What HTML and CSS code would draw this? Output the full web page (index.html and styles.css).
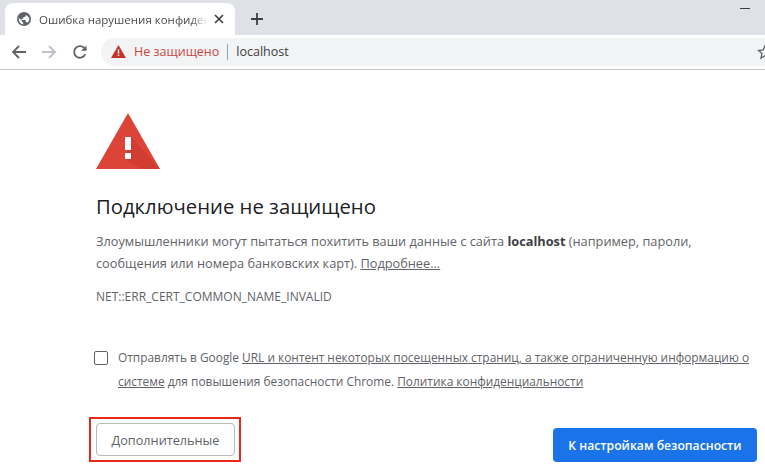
FILE: index.html
```html
<!DOCTYPE html>
<html lang="ru">
<head>
  <meta charset="UTF-8">
  <title>Ошибка нарушения конфиденциальности</title>
  <link rel="stylesheet" href="styles.css">
</head>
<body>
  <div class="tabstrip">
    <div class="tab">
      <svg class="favicon" width="14" height="14" viewBox="0 0 16 16">
        <circle cx="8" cy="8" r="8" fill="#5f6368"/>
        <path d="M7 14.300C4.300 13.800 2 11.300 2 8c0-.5.1-.9.2-1.300L5.600 10v.7c0 .7.6 1.300 1.400 1.300zM12 12.400c-.2-.5-.7-.9-1.300-.9H10V9.600c0-.4-.3-.6-.6-.6H5.300V7.600h1.300c.4 0 .7-.3.7-.7V5.600h1.300c.7 0 1.400-.6 1.400-1.300v-.9C12.300 4.300 14 6 14 8c0 1.700-.8 3.300-2 4.400z" fill="#fff"/>
      </svg>
      <span class="tab-title">Ошибка нарушения конфиденц</span>
      <svg class="tab-close" width="10" height="10" viewBox="0 0 10 10">
        <path d="M1 1l8 8M9 1l-8 8" stroke="#3c4043" stroke-width="1.700" fill="none"/>
      </svg>
    </div>
    <svg class="new-tab" width="12" height="12" viewBox="0 0 12 12">
      <path d="M6 0v12M0 6h12" stroke="#3c4043" stroke-width="1.800" fill="none"/>
    </svg>
    <div class="minimize"></div>
  </div>

  <div class="toolbar">
    <svg class="nav-icon" width="16" height="16" viewBox="0 0 16 16">
      <path d="M15 8H2M8 2L2 8l6 6" stroke="#5f6368" stroke-width="1.800" fill="none"/>
    </svg>
    <svg class="nav-icon" width="16" height="16" viewBox="0 0 16 16">
      <path d="M1 8h13M8 2l6 6-6 6" stroke="#bdc1c6" stroke-width="1.800" fill="none"/>
    </svg>
    <svg class="nav-icon" width="16" height="16" viewBox="0 0 16 16">
      <path d="M13.300 10.200A5.800 5.800 0 1 1 12.100 3.900L14 5.800" stroke="#5f6368" stroke-width="1.800" fill="none"/>
      <path d="M14.500 1.500v5.300H9.200z" fill="#5f6368"/>
    </svg>
    <div class="omnibox">
      <svg width="15" height="13" viewBox="0 0 15 13">
        <path d="M7.500 0L15 13H0z" fill="#c5352b"/>
        <path d="M6.800 4.500h1.400v4H6.800zM6.800 9.500h1.400v1.400H6.800z" fill="#fff"/>
      </svg>
      <span class="not-secure">Не защищено</span>
      <span class="divider"></span>
      <span class="host">localhost</span>
      <svg class="star" width="16" height="16" viewBox="0 0 16 16">
        <path d="M8 1.800l1.900 4.200 4.600.5-3.400 3.100.9 4.500L8 11.800l-4 2.300.9-4.500L1.500 6.500l4.600-.5z" stroke="#5f6368" stroke-width="1.300" fill="none"/>
      </svg>
    </div>
  </div>

  <main class="interstitial">
    <svg class="warning" width="64" height="56" viewBox="0 0 64 56">
      <path d="M32 0l32 56H0z" fill="#dc4437"/>
      <path d="M35 24l29 32H46L29 46z" fill="#c8392e" opacity=".55"/>
      <path d="M29 24h6v13h-6zM29 40h6v6h-6z" fill="#fff"/>
    </svg>
    <h1>Подключение не защищено</h1>
    <p class="summary">Злоумышленники могут пытаться похитить ваши данные с сайта <b>localhost</b> (например, пароли, сообщения или номера банковских карт). <a href="#">Подробнее...</a></p>
    <p class="error-code">NET::ERR_CERT_COMMON_NAME_INVALID</p>
    <div class="optin">
      <span class="checkbox"></span>
      <p>Отправлять в Google <a href="#">URL и контент некоторых посещенных страниц, а также ограниченную информацию о системе</a> для повышения безопасности Chrome. <a href="#">Политика конфиденциальности</a></p>
    </div>
    <div class="actions">
      <div class="highlight"><button class="btn-details">Дополнительные</button></div>
      <button class="btn-primary">К настройкам безопасности</button>
    </div>
  </main>
</body>
</html>
```

FILE: styles.css
```css
* {
  box-sizing: border-box;
}

body {
  margin: 0;
  width: 765px;
  height: 471px;
  overflow: hidden;
  background: #fff;
  font-family: 'Open Sans', 'Noto Sans', sans-serif;
  color: #5f6368;
}

.tabstrip {
  display: flex;
  align-items: flex-end;
  height: 35px;
  padding: 3px 0 0 5px;
  background: #dee1e6;
}

.tab {
  display: flex;
  align-items: center;
  width: 230px;
  height: 32px;
  padding: 0 11px 0 12px;
  background: #fff;
  border-radius: 8px 8px 0 0;
}

.tab-title {
  flex: 1;
  margin-left: 8px;
  overflow: hidden;
  white-space: nowrap;
  font-size: 11.500px;
  color: #4a4d51;
  -webkit-mask-image: linear-gradient(to right, #000 90%, transparent);
  mask-image: linear-gradient(to right, #000 90%, transparent);
}

.tab-close {
  flex: none;
  margin-left: 6px;
}

.new-tab {
  margin: 0 0 10px 16px;
}

.minimize {
  width: 10px;
  height: 1px;
  margin: 0 15px 26px auto;
  background: #3c4043;
}

.toolbar {
  display: flex;
  align-items: center;
  height: 35px;
  padding-left: 11px;
  background: #fff;
  border-bottom: 1px solid #c8c9cb;
}

.nav-icon {
  margin-right: 14px;
  flex: none;
}

.nav-icon:nth-child(2) {
  margin-right: 15px;
}

.nav-icon:nth-child(3) {
  margin-right: 13px;
}

.omnibox {
  display: flex;
  align-items: center;
  flex: 1;
  height: 28px;
  margin-bottom: 1px;
  padding-left: 10px;
  background: #f1f3f4;
  border-radius: 14px 0 0 14px;
  font-size: 12.500px;
}

.not-secure {
  margin-left: 8px;
  color: #c9483f;
}

.divider {
  width: 1px;
  height: 16px;
  margin: 0 8px;
  background: #9aa0a6;
}

.host {
  color: #3c4043;
}

.star {
  margin-left: auto;
  margin-right: -8px;
}

.interstitial {
  display: flex;
  flex-direction: column;
  padding: 43px 8px 0 96px;
}

.warning {
  display: block;
}

h1 {
  margin: 23px 0 0;
  padding-bottom: 1px;
  font-size: 20.300px;
  font-weight: 400;
  line-height: 28px;
  color: #202124;
}

.summary {
  margin: 9px 0 0;
  font-size: 12.750px;
  line-height: 22px;
  color: #5f6368;
}

.summary b {
  font-weight: 700;
  color: #3c4043;
}

a {
  color: #5f6368;
  text-decoration: underline;
}

.error-code {
  margin: 15px 0 0;
  font-size: 12px;
  line-height: 16px;
  color: #5f6368;
}

.optin {
  display: flex;
  margin-top: 40px;
}

.checkbox {
  flex: none;
  width: 14px;
  height: 14px;
  margin: 6px 0 0 -2px;
  border: 1.500px solid #5f6368;
  border-radius: 2px;
}

.optin p {
  margin: 0 0 0 10px;
  font-size: 11.900px;
  line-height: 24px;
  color: #5f6368;
}

.actions {
  display: flex;
  justify-content: space-between;
  align-items: flex-end;
  margin: 24px 0 0 -7px;
}

.highlight {
  padding: 4px 4px 4px 5px;
  border: 2px solid #e8281c;
}

button {
  display: block;
  border-radius: 4px;
  font-family: inherit;
  font-size: 12.700px;
}

.btn-details {
  width: 139px;
  height: 33px;
  background: #fff;
  border: 1px solid #b6b9bd;
  color: #5f6368;
}

.btn-primary {
  width: 204px;
  height: 34px;
  background: #1a73e8;
  border: none;
  color: #fff;
  font-size: 12.200px;
  font-weight: 600;
}
```
